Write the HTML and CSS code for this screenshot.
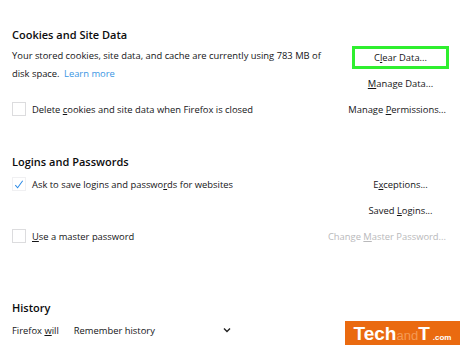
FILE: index.html
```html
<!DOCTYPE html>
<html lang="en">
<head>
  <meta charset="UTF-8">
  <title>Privacy &amp; Security</title>
  <link rel="stylesheet" href="styles.css">
</head>
<body>
  <main class="prefs">

    <h2 class="sec-title first">Cookies and Site Data</h2>
    <div class="sec-grid">
      <p class="desc">
        <span>Your stored cookies, site data, and cache are currently using 783 MB of</span><br>
        <span>disk space.</span> <a class="link" href="#">Learn more</a>
      </p>
      <div class="btn-col">
        <button class="btn highlight">C<u>l</u>ear Data...</button>
      </div>
      <div class="btn-col">
        <button class="btn"><u>M</u>anage Data...</button>
      </div>
      <label class="check">
        <span class="box"></span>
        <span>Delete <u>c</u>ookies and site data when Firefox is closed</span>
      </label>
      <div class="btn-col">
        <button class="btn">Manage <u>P</u>ermissions...</button>
      </div>
    </div>

    <h2 class="sec-title">Logins and Passwords</h2>
    <div class="row">
      <label class="check">
        <span class="box checked">
          <svg width="13" height="13" viewBox="0 0 13 13"><path d="M2.5 7.2 L5 10 L10.5 2.5" fill="none" stroke="#2b8ae6" stroke-width="1.1"/></svg>
        </span>
        <span>Ask to save logins and passwo<u>r</u>ds for websites</span>
      </label>
      <button class="btn">E<u>x</u>ceptions...</button>
    </div>
    <div class="row">
      <span></span>
      <button class="btn">Saved <u>L</u>ogins...</button>
    </div>
    <div class="row">
      <label class="check">
        <span class="box"></span>
        <span><u>U</u>se a master password</span>
      </label>
      <button class="btn disabled">Change <u>M</u>aster Password...</button>
    </div>

    <h2 class="sec-title history">History</h2>
    <div class="row history-row">
      <span>Firefox <u>w</u>ill</span>
      <div class="select">
        <span>Remember history</span>
        <svg width="8" height="6" viewBox="0 0 8 6"><path d="M1 1.5 L4 4.5 L7 1.5" fill="none" stroke="#222" stroke-width="1.4"/></svg>
      </div>
    </div>

  </main>

  <div class="watermark">
    <span class="wm-big">Tech</span><span class="wm-and">and</span><span class="wm-big">T</span><span class="wm-com">.com</span>
  </div>
</body>
</html>
```

FILE: styles.css
```css
body {
  margin: 0;
  background-color: #ffffff;
  font-family: "Open Sans", "Noto Sans", sans-serif;
  font-size: 9.4px;
  color: #151517;
  width: 460px;
  height: 345px;
  overflow: hidden;
  position: relative;
}

.prefs {
  padding: 0 11px 0 12px;
}

.sec-title {
  margin: 31px 0 0 0;
  height: 18px;
  line-height: 18px;
  font-size: 11px;
  font-weight: 600;
  color: #0c0c0d;
}

.sec-title.first {
  margin-top: 26px;
}

.sec-title.history {
  margin-top: 50px;
}

.sec-grid {
  display: grid;
  grid-template-columns: 1fr auto;
  grid-template-rows: 26px 26px 26px;
}

.desc {
  grid-row: 1 / 3;
  margin: 3px 0 0 0;
  line-height: 18px;
  width: 320px;
  white-space: nowrap;
}

.link {
  color: #3a96e3;
  text-decoration: none;
  margin-left: 2px;
}

.btn-col {
  grid-column: 2;
  display: flex;
  align-items: center;
  justify-content: flex-end;
}

.btn {
  min-width: 97px;
  height: 23px;
  padding: 0;
  border: 3px solid transparent;
  background: none;
  font-family: inherit;
  font-size: 9.4px;
  color: #151517;
  text-align: center;
  cursor: pointer;
}

.btn.highlight {
  border-color: #2fef2f;
}

.btn.disabled {
  color: #b9b9bb;
}

.check {
  display: flex;
  align-items: center;
  gap: 6px;
}

.box {
  width: 12px;
  height: 12px;
  border: 1px solid #dcdcde;
  display: flex;
  align-items: center;
  justify-content: center;
}

.box.checked {
  border-color: #f0f0f2;
}

.row {
  display: flex;
  justify-content: space-between;
  align-items: center;
  height: 26px;
}

.history-row {
  justify-content: flex-start;
  gap: 15px;
  height: 26px;
}

.select {
  display: flex;
  align-items: center;
  justify-content: space-between;
  width: 157px;
}

.watermark {
  position: absolute;
  right: 0;
  bottom: 0;
  width: 115px;
  height: 24px;
  background-color: #ea6a10;
  display: flex;
  align-items: baseline;
  justify-content: center;
  font-family: "Liberation Sans", Arial, sans-serif;
  font-weight: 700;
  line-height: 25px;
}

.wm-big {
  color: #ffffff;
  font-size: 19px;
}

.wm-and {
  color: #f59a55;
  font-size: 13px;
  font-weight: 400;
}

.wm-com {
  color: #ffffff;
  font-size: 8px;
  margin-left: 3px;
}
```
